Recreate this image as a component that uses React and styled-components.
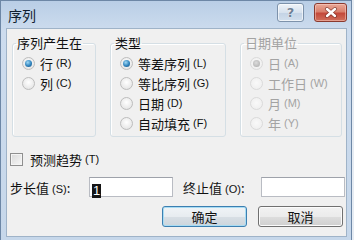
import styled, { createGlobalStyle } from 'styled-components';

const GlobalStyle = createGlobalStyle`
  html, body {
    margin: 0;
    padding: 0;
    background: #e6ecf3;
  }
  body {
    font-family: "Liberation Sans", "Noto Sans CJK SC", sans-serif;
    font-size: 13px;
    color: #111;
  }
`;

const GROUPS = [
    {
        title: '序列产生在',
        width: 84,
        items: [
            { text: '行', key: 'R', checked: true },
            { text: '列', key: 'C' }
        ]
    },
    {
        title: '类型',
        width: 116,
        items: [
            { text: '等差序列', key: 'L', checked: true },
            { text: '等比序列', key: 'G' },
            { text: '日期', key: 'D' },
            { text: '自动填充', key: 'F' }
        ]
    },
    {
        title: '日期单位',
        width: 102,
        disabled: true,
        items: [
            { text: '日', key: 'A', checked: true },
            { text: '工作日', key: 'W' },
            { text: '月', key: 'M' },
            { text: '年', key: 'Y' }
        ]
    }
];

function CloseGlyph() {
    return (
        <svg width="14" height="11" viewBox="0 0 14 11">
            <path
                d="M3 2 L11 9 M11 2 L3 9"
                stroke="#5a1a12"
                strokeWidth="4"
                strokeLinecap="round"
                opacity="0.55"
            />
            <path
                d="M3 2 L11 9 M11 2 L3 9"
                stroke="#fff"
                strokeWidth="2.4"
                strokeLinecap="round"
            />
        </svg>
    );
}

export default function App() {
    return (
        <>
            <GlobalStyle />
            <Window>
                <TitleBar>
                    <Title>序列</Title>
                    <TitleButtons>
                        <HelpButton>?</HelpButton>
                        <CloseButton>
                            <CloseGlyph />
                        </CloseButton>
                    </TitleButtons>
                </TitleBar>
                <Body>
                    <GroupRow>
                        {GROUPS.map((group) => (
                            <Group key={group.title} width={group.width}>
                                <Legend disabled={group.disabled}>{group.title}</Legend>
                                {group.items.map((item) => (
                                    <RadioRow key={item.key} disabled={group.disabled}>
                                        <RadioDot checked={item.checked} disabled={group.disabled} />
                                        <span>{item.text}</span>
                                        <Key disabled={group.disabled}>({item.key})</Key>
                                    </RadioRow>
                                ))}
                            </Group>
                        ))}
                    </GroupRow>
                    <CheckRow>
                        <CheckBox />
                        <span>预测趋势</span>
                        <Key>(T)</Key>
                    </CheckRow>
                    <FieldRow>
                        <FieldLabel>
                            步长值<Key>(S)</Key>:
                        </FieldLabel>
                        <TextBox>
                            <Selected>1</Selected>
                        </TextBox>
                        <FieldLabel second>
                            终止值<Key>(O)</Key>:
                        </FieldLabel>
                        <TextBox />
                    </FieldRow>
                    <ButtonRow>
                        <Button primary>确定</Button>
                        <Button>取消</Button>
                    </ButtonRow>
                </Body>
            </Window>
        </>
    );
}

const Window = styled.div`
    width: 352px;
    height: 240px;
    box-sizing: border-box;
    display: flex;
    flex-direction: column;
    border: 1px solid #6d87a6;
    border-bottom: none;
    background: linear-gradient(#b9cee6, #cddcee 30px, #c6d7ea);
`;

const TitleBar = styled.div`
    height: 27px;
    display: flex;
    align-items: center;
    justify-content: space-between;
    padding: 0 4px 0 7px;
    flex-shrink: 0;
`;

const Title = styled.div`
    font-family: "Noto Sans CJK SC", sans-serif;
    font-size: 14px;
    color: #0f1e30;
    line-height: 16px;
    margin-top: 1px;
`;

const TitleButtons = styled.div`
    display: flex;
    gap: 10px;
    align-self: flex-start;
    margin-top: 2px;
`;

const HelpButton = styled.div`
    width: 27px;
    height: 19px;
    box-sizing: border-box;
    border: 1px solid #7d92ab;
    border-radius: 3px;
    background: linear-gradient(#eef3f9, #d7e2ee 50%, #c3d3e5 51%, #d2dfed);
    box-shadow: inset 0 0 0 1px rgba(255, 255, 255, 0.6);
    display: flex;
    align-items: center;
    justify-content: center;
    font-family: "DejaVu Sans", sans-serif;
    font-weight: bold;
    font-size: 13px;
    color: #6f8196;
    text-shadow: 0 0 1px #fff, 0 0 1px #fff;
`;

const CloseButton = styled.div`
    width: 33px;
    height: 19px;
    box-sizing: border-box;
    border: 1px solid #8a3a2f;
    border-radius: 3px;
    background: linear-gradient(#eaa897, #d9806d 45%, #c4493a 55%, #d0705c);
    box-shadow: inset 0 0 0 1px rgba(255, 220, 210, 0.45);
    display: flex;
    align-items: center;
    justify-content: center;
`;

const Body = styled.div`
    flex: 1;
    margin: 0 4px 3px 5px;
    background: #f0f0f0;
    border: 1px solid #9fb3c8;
    padding: 7px 1px 0 3px;
    display: flex;
    flex-direction: column;
`;

const GroupRow = styled.div`
    display: flex;
    gap: 14px;
    padding-left: 2px;
`;

const Group = styled.fieldset`
    width: ${({ width }) => width}px;
    box-sizing: border-box;
    margin: 0;
    padding: 3px 4px 3px 4px;
    border: 1px solid #d5dfe5;
    border-radius: 3px;
    box-shadow: inset 1px 1px 0 #fff;
`;

const Legend = styled.legend`
    font-family: "Noto Sans CJK SC", sans-serif;
    font-size: 13px;
    line-height: 14px;
    padding: 0 1px;
    margin-left: -1px;
    color: ${({ disabled }) => (disabled ? '#a3a3a3' : '#111')};
`;

const RadioRow = styled.div`
    height: 20px;
    display: flex;
    align-items: center;
    padding-left: 5px;
    font-family: "Noto Sans CJK SC", sans-serif;
    font-size: 13px;
    white-space: nowrap;
    color: ${({ disabled }) => (disabled ? '#a3a3a3' : '#111')};
`;

const RadioDot = styled.span`
    width: 13px;
    height: 13px;
    box-sizing: border-box;
    border-radius: 50%;
    margin-right: 5px;
    flex-shrink: 0;
    border: 1px solid ${({ disabled }) => (disabled ? '#dadada' : '#bdbdbd')};
    background: ${({ disabled }) =>
        disabled
            ? 'radial-gradient(circle at 50% 45%, #f9f9f9, #ececec)'
            : 'radial-gradient(circle at 50% 40%, #ffffff, #e8e8e8 70%, #dadada)'};
    display: flex;
    align-items: center;
    justify-content: center;

    &::after {
        content: '';
        width: 7px;
        height: 7px;
        border-radius: 50%;
        display: ${({ checked }) => (checked ? 'block' : 'none')};
        background: ${({ disabled }) =>
            disabled
                ? 'radial-gradient(circle at 45% 40%, #dcdcdc, #a9a9a9)'
                : 'radial-gradient(circle at 40% 35%, #9fd8f5, #2f83bd 55%, #1a4d78)'};
    }
`;

const Key = styled.span`
    font-family: "Liberation Sans", sans-serif;
    font-size: 11px;
    margin-left: 3px;
    color: ${({ disabled }) => (disabled ? '#a3a3a3' : 'inherit')};
`;

const CheckRow = styled.div`
    height: 16px;
    margin-top: 14px;
    display: flex;
    align-items: center;
    font-family: "Noto Sans CJK SC", sans-serif;
    font-size: 13px;
`;

const CheckBox = styled.span`
    width: 13px;
    height: 13px;
    box-sizing: border-box;
    margin-right: 7px;
    border: 1px solid #8f8f8f;
    background: linear-gradient(135deg, #d9d9d9, #f7f7f7);
    box-shadow: inset 0 0 0 1px #f4f4f4;
`;

const FieldRow = styled.div`
    height: 20px;
    margin-top: 10px;
    display: flex;
    align-items: center;
    font-family: "Noto Sans CJK SC", sans-serif;
    font-size: 13px;
`;

const FieldLabel = styled.div`
    width: ${({ second }) => (second ? '78px' : '79px')};
    margin-left: ${({ second }) => (second ? '10px' : '0')};
    white-space: nowrap;
`;

const TextBox = styled.div`
    width: 84px;
    height: 20px;
    box-sizing: border-box;
    background: #fff;
    border: 1px solid #b9bcc3;
    border-top-color: #9ea2aa;
    padding: 2px 0 0 2px;
`;

const Selected = styled.span`
    display: inline-block;
    background: #151515;
    color: #fff;
    font-family: "Liberation Sans", sans-serif;
    font-size: 13px;
    line-height: 14px;
    padding: 0 1px;
`;

const ButtonRow = styled.div`
    margin-top: 9px;
    display: flex;
    justify-content: flex-end;
    gap: 11px;
    padding-right: 2px;
`;

const Button = styled.div`
    width: 85px;
    height: 21px;
    box-sizing: border-box;
    border-radius: 3px;
    border: 1px solid ${({ primary }) => (primary ? '#3c7fb1' : '#707070')};
    background: ${({ primary }) =>
        primary
            ? 'linear-gradient(#f0f4f7, #e7ecf0 50%, #d8dfe5 51%, #ccd5dc)'
            : 'linear-gradient(#f2f2f2, #ebebeb 50%, #dddddd 51%, #cfcfcf)'};
    box-shadow: inset 0 0 0 1px ${({ primary }) => (primary ? '#a8dcf3' : '#fbfbfb')};
    display: flex;
    align-items: center;
    justify-content: center;
    font-family: "Noto Sans CJK SC", sans-serif;
    font-size: 13px;
    color: #111;
`;
